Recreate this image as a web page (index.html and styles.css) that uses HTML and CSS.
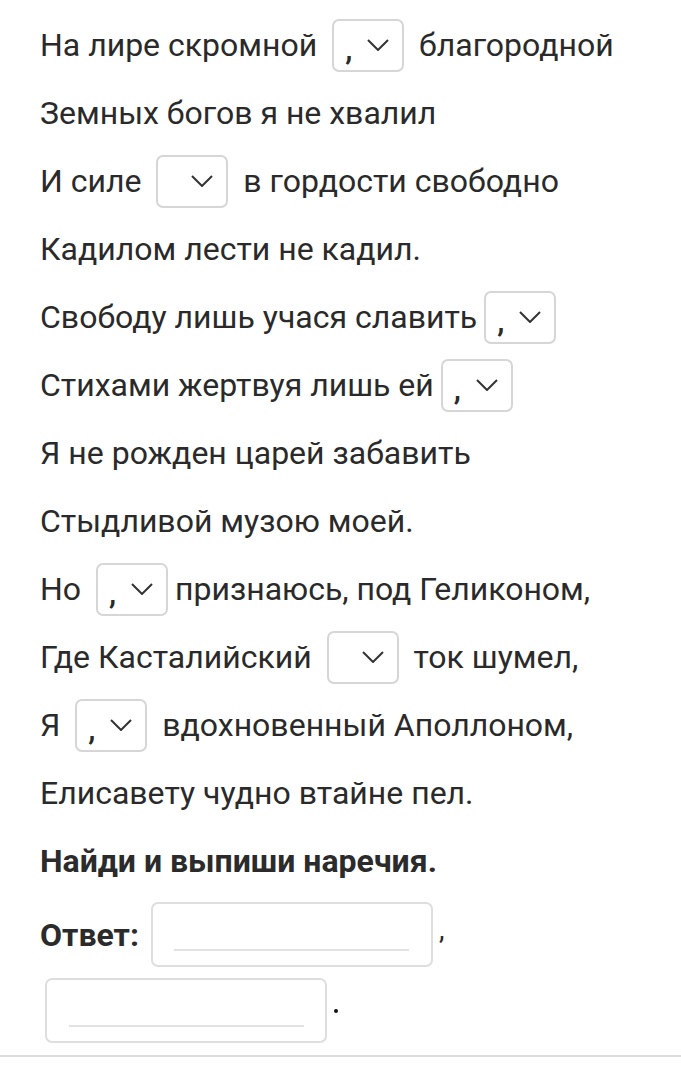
FILE: index.html
```html
<!DOCTYPE html>
<html lang="ru">
<head>
  <meta charset="UTF-8">
  <title>Наречия</title>
  <link rel="stylesheet" href="styles.css">
</head>
<body>
  <div class="task">
    <div class="line">На лире скромной <span class="pick"><span class="val">,</span><svg class="chev" viewBox="0 0 22 12"><path d="M1 1 L11 11 L21 1"/></svg></span> благородной</div>
    <div class="line">Земных богов я не хвалил</div>
    <div class="line">И силе <span class="pick"><span class="val"></span><svg class="chev" viewBox="0 0 22 12"><path d="M1 1 L11 11 L21 1"/></svg></span> в гордости свободно</div>
    <div class="line">Кадилом лести не кадил.</div>
    <div class="line">Свободу лишь учася славить<span class="pick"><span class="val">,</span><svg class="chev" viewBox="0 0 22 12"><path d="M1 1 L11 11 L21 1"/></svg></span></div>
    <div class="line">Стихами жертвуя лишь ей<span class="pick"><span class="val">,</span><svg class="chev" viewBox="0 0 22 12"><path d="M1 1 L11 11 L21 1"/></svg></span></div>
    <div class="line">Я не рожден царей забавить</div>
    <div class="line">Стыдливой музою моей.</div>
    <div class="line">Но <span class="pick"><span class="val">,</span><svg class="chev" viewBox="0 0 22 12"><path d="M1 1 L11 11 L21 1"/></svg></span>признаюсь, под Геликоном,</div>
    <div class="line">Где Касталийский <span class="pick"><span class="val"></span><svg class="chev" viewBox="0 0 22 12"><path d="M1 1 L11 11 L21 1"/></svg></span> ток шумел,</div>
    <div class="line">Я <span class="pick"><span class="val">,</span><svg class="chev" viewBox="0 0 22 12"><path d="M1 1 L11 11 L21 1"/></svg></span> вдохновенный Аполлоном,</div>
    <div class="line">Елисавету чудно втайне пел.</div>

    <div class="line bold">Найди и выпиши наречия.</div>

    <div class="answer">
      <span class="bold">Ответ:</span>
      <span class="field"><span class="under"></span></span><span class="mark">,</span>
    </div>
    <div class="answer second">
      <span class="field"><span class="under"></span></span><span class="mark dot"></span>
    </div>
  </div>
</body>
</html>
```

FILE: styles.css
```css
/* page */
body {
  margin: 0;
  background: #fff;
  font-family: Roboto, "Noto Sans", sans-serif;
  color: #2a2a2a;
}

.task {
  padding: 11px 0 12px 40px;
  border-bottom: 2px solid #dcdcdc;
}

/* each verse line */
.line {
  height: 68px;
  display: flex;
  align-items: center;
  font-size: 32px;
  white-space: pre;
}

.bold {
  font-weight: bold;
  color: #2b2b2b;
}

/* dropdown blank */
.pick {
  display: inline-flex;
  align-items: center;
  box-sizing: border-box;
  width: 72px;
  height: 53px;
  margin: 0 7px;
  border: 2px solid #d6d6d6;
  border-radius: 7px;
  padding: 0 0 0 11px;
}

.val {
  width: 22px;
  font-size: 32px;
  font-weight: 500;
  line-height: 1;
  padding-top: 8px;
}

.chev {
  width: 22px;
  height: 12px;
  margin-left: 0;
  fill: none;
  stroke: #333;
  stroke-width: 2;
}

/* answer fields */
.answer {
  display: flex;
  align-items: center;
  font-size: 32px;
  margin-top: 7px;
}

.answer .bold {
  margin-right: 12px;
}

.field {
  display: inline-flex;
  align-items: flex-end;
  justify-content: center;
  box-sizing: border-box;
  width: 282px;
  height: 65px;
  border: 2px solid #dedede;
  border-radius: 7px;
  padding-bottom: 14px;
}

.under {
  width: 235px;
  border-top: 2px solid #e2e2e2;
}

.mark {
  margin-left: 6px;
  font-size: 28px;
  padding-bottom: 10px;
}

.second {
  margin-left: 5px;
  margin-top: 11px;
}

.dot {
  width: 4px;
  height: 4px;
  margin-left: 7px;
  padding: 0;
  border-radius: 50%;
  background: #111;
}
```
